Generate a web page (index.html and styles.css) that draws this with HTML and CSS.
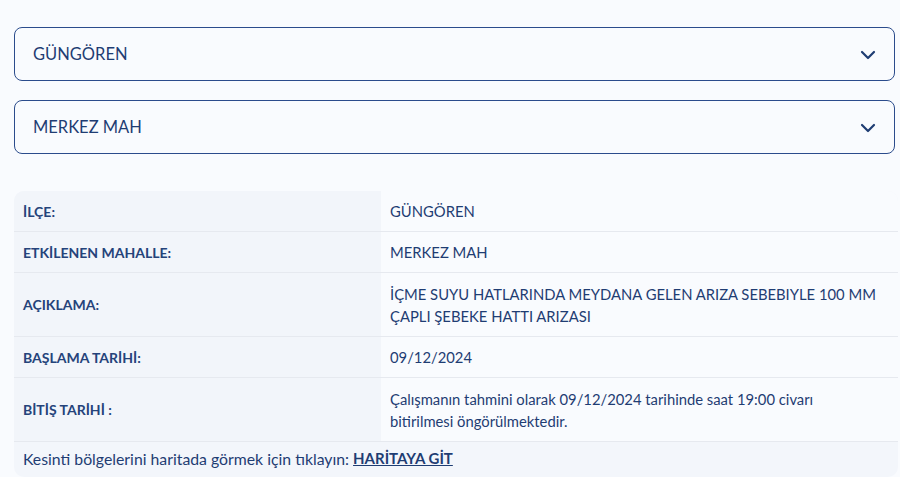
FILE: index.html
```html
<!DOCTYPE html>
<html lang="tr">
<head>
  <meta charset="UTF-8">
  <meta name="viewport" content="width=device-width, initial-scale=1.0">
  <title>Arıza Bilgisi</title>
  <link rel="stylesheet" href="styles.css">
</head>
<body>
  <div class="wrap">
    <!-- ilce / mahalle secimi -->
    <div class="select">
      <span>GÜNGÖREN</span>
      <svg class="chev" width="16" height="10" viewBox="0 0 16 10"><path d="M2 2l6 6 6-6" fill="none" stroke="#1f3d73" stroke-width="2.2" stroke-linecap="round" stroke-linejoin="round"/></svg>
    </div>
    <div class="select">
      <span>MERKEZ MAH</span>
      <svg class="chev" width="16" height="10" viewBox="0 0 16 10"><path d="M2 2l6 6 6-6" fill="none" stroke="#1f3d73" stroke-width="2.2" stroke-linecap="round" stroke-linejoin="round"/></svg>
    </div>

    <div class="card">
      <table class="info">
        <tr>
          <th>İLÇE:</th>
          <td>GÜNGÖREN</td>
        </tr>
        <tr>
          <th>ETKİLENEN MAHALLE:</th>
          <td>MERKEZ MAH</td>
        </tr>
        <tr class="tall">
          <th>AÇIKLAMA:</th>
          <td>İÇME SUYU HATLARINDA MEYDANA GELEN ARIZA SEBEBIYLE 100 MM<br>ÇAPLI ŞEBEKE HATTI ARIZASI</td>
        </tr>
        <tr>
          <th>BAŞLAMA TARİHİ:</th>
          <td>09/12/2024</td>
        </tr>
        <tr class="tall">
          <th>BİTİŞ TARİHİ :</th>
          <td>Çalışmanın tahmini olarak 09/12/2024 tarihinde saat 19:00 civarı<br>bitirilmesi öngörülmektedir.</td>
        </tr>
      </table>
      <div class="foot">
        Kesinti bölgelerini haritada görmek için tıklayın: <a href="#">HARİTAYA GİT</a>
      </div>
    </div>
  </div>
</body>
</html>
```

FILE: styles.css
```css
body {
  margin: 0;
  background: #f9fbfe;
  font-family: Lato, "Open Sans", sans-serif;
  color: #1f3d73;
}

.wrap {
  padding: 27px 5px 0 14px;
}

.select {
  height: 54px;
  box-sizing: border-box;
  border: 1px solid #2b4c8c;
  border-radius: 8px;
  display: flex;
  align-items: center;
  justify-content: space-between;
  padding: 0 18px 0 18px;
  margin-bottom: 19px;
  font-size: 16.5px;
}

.chev {
  margin-top: 2px;
}

.card {
  margin-top: 37px;
  margin-right: -3px;
  background: #f3f6fb;
  border-radius: 10px;
  overflow: hidden;
}

.info {
  width: 100%;
  border-collapse: collapse;
  font-size: 14.8px;
}

.info tr {
  border-bottom: 1px solid #e6e9ef;
}

.info th {
  width: 349px;
  text-align: left;
  font-weight: 700;
  font-size: 14px;
  padding: 0 9px;
  height: 40px;
  background: #f2f5fa;
  color: #25437a;
}

.info td {
  background: #f9fbfe;
  padding: 0 9px;
  height: 40px;
  line-height: 22px;
}

.info tr.tall th,
.info tr.tall td {
  height: 63px;
}

.foot {
  height: 38px;
  display: flex;
  align-items: center;
  padding: 0 9px;
  font-size: 15.8px;
  margin-top: -3px;
}

.foot a {
  color: #1f3d73;
  font-weight: 700;
  font-size: 15px;
  margin-left: 4px;
}
```
